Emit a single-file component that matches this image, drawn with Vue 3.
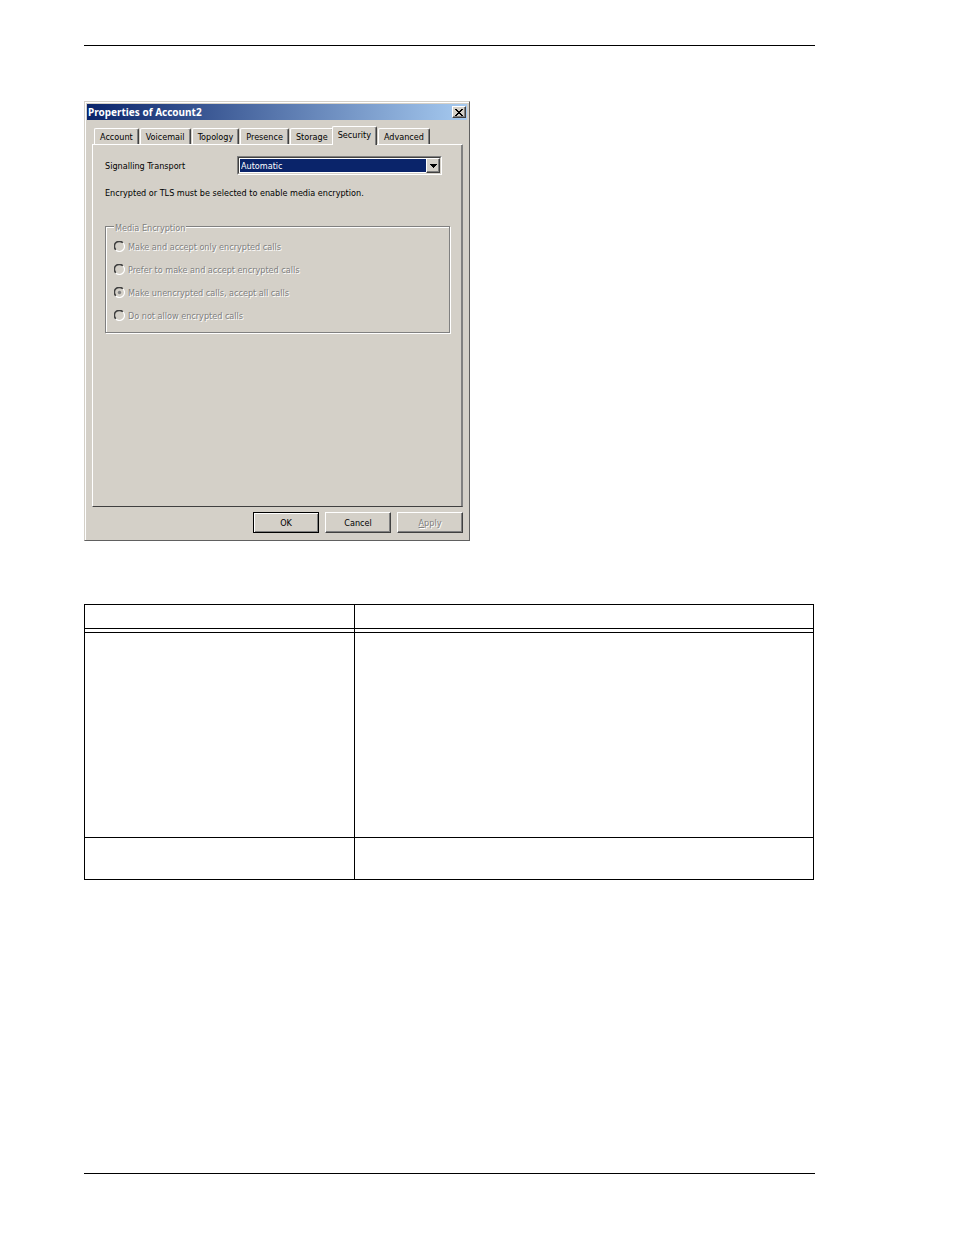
<script setup>
import { ref } from 'vue'

const tabs = ['Account', 'Voicemail', 'Topology', 'Presence', 'Storage', 'Security', 'Advanced']
const activeTab = ref('Security')
const transport = ref('Automatic')
const media = ref('unencrypted')
const mediaOptions = [
  { id: 'only', label: 'Make and accept only encrypted calls' },
  { id: 'prefer', label: 'Prefer to make and accept encrypted calls' },
  { id: 'unencrypted', label: 'Make unencrypted calls, accept all calls' },
  { id: 'none', label: 'Do not allow encrypted calls' },
]
</script>

<template>
  <div class="page">
    <section class="dialog" role="dialog" aria-labelledby="dialog-title">
      <header class="titlebar">
        <h1 id="dialog-title">Properties of Account2</h1>
        <button class="close" type="button" aria-label="Close">
          <svg width="8" height="7" viewBox="0 0 8 7" shape-rendering="crispEdges">
            <path d="M0 0h2v1h1v1h2v-1h1v-1h2v1h-1v1h-1v1h-1v1h1v1h1v1h1v1h-2v-1h-1v-1h-2v1h-1v1h-2v-1h1v-1h1v-1h1v-1h-1v-1h-1v-1h-1z" />
          </svg>
        </button>
      </header>

      <div class="content">
        <div class="tabs" role="tablist">
          <button
            v-for="tab in tabs"
            :key="tab"
            class="tab"
            :class="{ active: tab === activeTab }"
            type="button"
            role="tab"
            :aria-selected="tab === activeTab"
            @click="activeTab = tab"
          >{{ tab }}</button>
        </div>

        <div class="panel" role="tabpanel">
          <div class="field">
            <label for="transport">Signalling Transport</label>
            <div class="combo">
              <select id="transport" v-model="transport">
                <option>Automatic</option>
                <option>TCP</option>
                <option>TLS</option>
              </select>
              <span class="arrow" aria-hidden="true">
                <svg width="7" height="4" viewBox="0 0 7 4" shape-rendering="crispEdges">
                  <path d="M0 0h7v1h-1v1h-1v1h-1v1h-1v-1h-1v-1h-1v-1h-1z" />
                </svg>
              </span>
            </div>
          </div>
          <p class="note">Encrypted or TLS must be selected to enable media encryption.</p>

          <fieldset class="group" disabled>
            <legend>Media Encryption</legend>
            <label v-for="option in mediaOptions" :key="option.id" class="option">
              <input v-model="media" type="radio" name="media" :value="option.id" />
              <svg class="dial" width="11" height="11" viewBox="0 0 11 11" aria-hidden="true">
                <path d="M9 1.8A4.8 4.8 0 0 1 1.8 9" fill="none" stroke="#fff" stroke-width="1.2" />
                <path d="M1.8 8.8A4.6 4.6 0 0 1 8.8 1.8" fill="none" stroke="#404040" stroke-width="1.6" />
                <circle v-if="media === option.id" cx="5.5" cy="5.5" r="1.7" fill="#808080" />
              </svg>
              <span>{{ option.label }}</span>
            </label>
          </fieldset>
        </div>

        <footer class="actions">
          <button class="btn default" type="button">OK</button>
          <button class="btn" type="button">Cancel</button>
          <button class="btn" type="button" disabled><span><u>A</u>pply</span></button>
        </footer>
      </div>
    </section>

    <table class="grid">
      <colgroup><col class="first" /><col /></colgroup>
      <thead>
        <tr><th></th><th></th></tr>
      </thead>
      <tbody>
        <tr class="gap"><td></td><td></td></tr>
        <tr class="tall"><td></td><td></td></tr>
        <tr class="short"><td></td><td></td></tr>
      </tbody>
    </table>
  </div>
</template>

<style>
body {
  background: #fff;
}
</style>

<style scoped>
* {
  box-sizing: border-box;
}

.page {
  display: flex;
  flex-direction: column;
  gap: 63px;
  margin: 45px 139px 61px 84px;
  min-height: calc(100vh - 106px);
  padding-top: 55px;
  border-top: 1px solid #000;
  border-bottom: 1px solid #000;
}

.dialog {
  width: 386px;
  max-width: 100%;
  padding: 1px;
  border: 1px solid;
  border-color: #d4d0c8 #606060 #606060 #d4d0c8;
  background: #d4d0c8;
  box-shadow: inset 1px 1px #fff;
  color: #000;
  font: 9px/14px "DejaVu Sans Condensed", "Noto Sans", sans-serif;
}

.dialog button,
.dialog select {
  font: inherit;
  color: inherit;
}

.titlebar {
  display: flex;
  align-items: center;
  justify-content: space-between;
  height: 16px;
  margin: 1px 1px 0;
  padding: 0 1px;
  background: linear-gradient(to right, #0a246a, #a6caf0);
}

h1 {
  margin: 0;
  color: #fff;
  font: bold 10px/14px "Noto Sans", sans-serif;
}

.close,
.btn,
.arrow {
  display: flex;
  align-items: center;
  justify-content: center;
  padding: 0;
  border: 1px solid;
  border-color: #fff #404040 #404040 #fff;
  background: #d4d0c8;
  box-shadow: inset -1px -1px #808080;
}

.close {
  width: 14px;
  height: 12px;
}

.content {
  padding: 6px 5px 6px 6px;
}

.tabs {
  display: flex;
  align-items: flex-end;
  gap: 1px;
  height: 18px;
  padding: 0 33px 0 2px;
}

.tab {
  flex: 1 0 auto;
  height: 16px;
  padding: 0 2px;
  border: solid;
  border-width: 1px 1px 0;
  border-color: #fff #404040 #fff #fff;
  border-radius: 2px 2px 0 0;
  background: #d4d0c8;
  box-shadow: inset -1px 0 #808080;
  line-height: 14px;
}

.tab.active {
  position: relative;
  height: 19px;
  margin: 0 0 -1px -3px;
  padding-bottom: 3px;
}

.panel {
  min-height: 363px;
  padding: 11px 11px 16px 12px;
  border: 1px solid;
  border-color: #fff #808080 #404040 #fff;
  box-shadow: inset -1px 0 #808080;
}

.field {
  display: flex;
  align-items: center;
}

.field label {
  width: 132px;
}

.combo {
  position: relative;
  width: 205px;
  height: 19px;
  border: 1px solid;
  border-color: #808080 #fff #fff #808080;
}

.combo select {
  appearance: none;
  display: block;
  width: 100%;
  height: 17px;
  padding: 0 18px 0 2px;
  border: 1px solid #d4d0c8;
  border-top-color: #404040;
  border-left-color: #404040;
  border-radius: 0;
  outline: 0;
  background: #0a246a;
  box-shadow: inset 0 0 0 1px #fff;
  color: #fff;
  line-height: 14px;
}

.arrow {
  position: absolute;
  top: 1px;
  right: 1px;
  width: 14px;
  height: 15px;
  pointer-events: none;
}

.note {
  margin: 11px 0 18px;
}

.group {
  min-width: 0;
  margin: 0 1px 0 0;
  padding: 1px 8px 5px;
  border: 1px solid #808080;
  box-shadow: 1px 1px #fff, inset 1px 1px #fff;
  color: #808080;
  text-shadow: 1px 1px #fff;
}

.group legend {
  padding: 4px 1px 0;
  background: #d4d0c8;
  line-height: 12px;
}

.option {
  display: flex;
  align-items: center;
  gap: 3px;
  height: 23px;
}

.option input {
  position: absolute;
  width: 11px;
  height: 11px;
  margin: 0;
  opacity: 0;
}

.actions {
  display: flex;
  justify-content: flex-end;
  gap: 6px;
  padding-top: 5px;
}

.btn {
  width: 66px;
  height: 21px;
}

.btn.default {
  border-color: #000;
  box-shadow: inset 1px 1px #fff, inset -1px -1px #808080;
}

.dialog .btn:disabled {
  color: #808080;
  text-shadow: 1px 1px #fff;
}

.grid {
  width: calc(100% - 1px);
  border-collapse: collapse;
  table-layout: fixed;
}

.grid .first {
  width: 270px;
}

.grid th,
.grid td {
  padding: 0;
  border: 1px solid #000;
}

.grid th {
  height: 24px;
}

.gap {
  height: 4px;
}

.tall {
  height: 205px;
}

.short {
  height: 42px;
}
</style>
